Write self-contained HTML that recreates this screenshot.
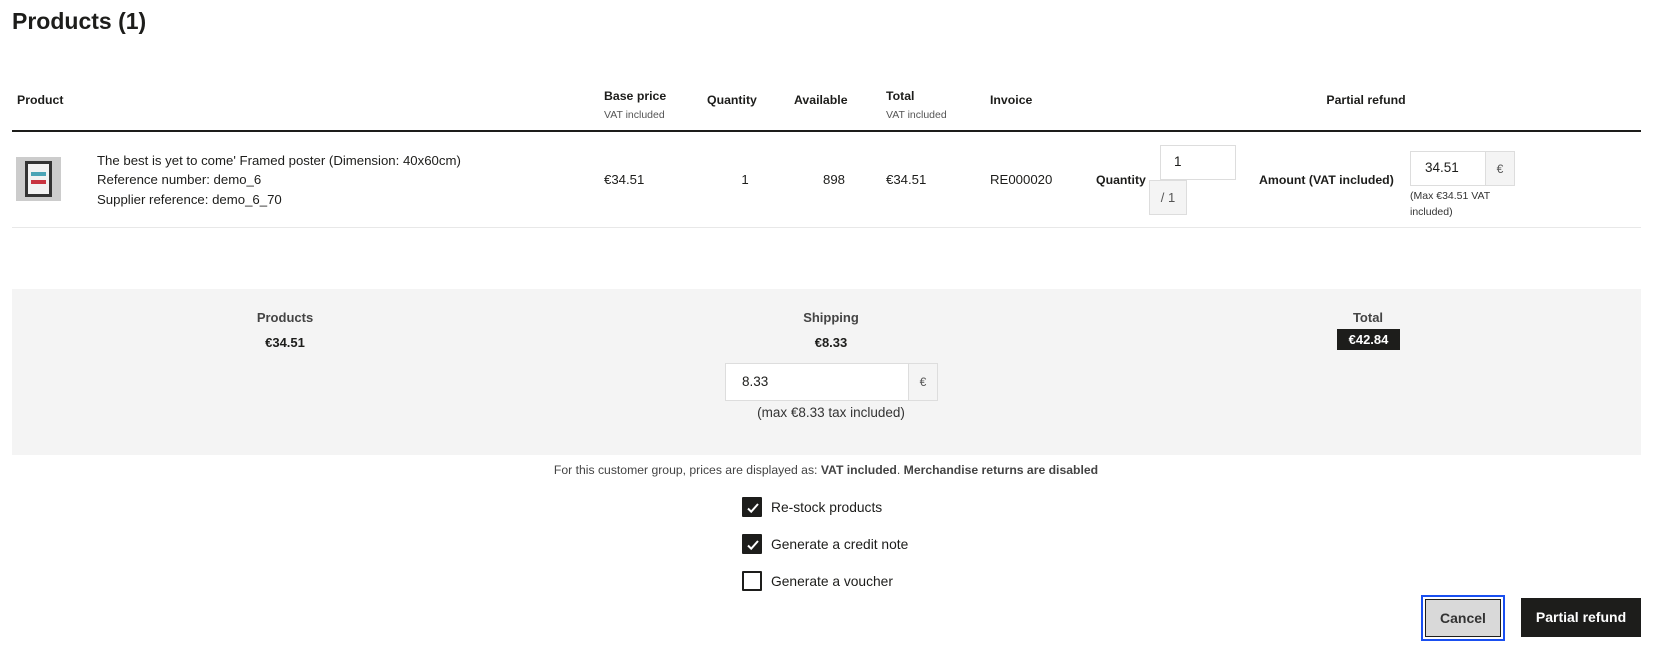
<!DOCTYPE html>
<html><head><meta charset="utf-8"><style>
*{margin:0;padding:0;box-sizing:border-box}
body{width:1659px;height:656px;background:#fff;font-family:"Liberation Sans",sans-serif;color:#1d1d1b;position:relative;overflow:hidden}
.a{position:absolute;white-space:nowrap}
.h{font-weight:bold;font-size:12.3px}
.s{font-size:10.5px;color:#555}
.t{font-size:13.2px}
.c{transform:translateX(-50%)}
.box{position:absolute;border:1px solid #ddd;background:#fff}
.add{position:absolute;border:1px solid #ddd;background:#f4f4f4;color:#555;font-size:12px;display:flex;align-items:center;justify-content:center}
.cb{position:absolute;width:20px;height:20px;border:2px solid #1d1d1b;border-radius:1px;background:#1d1d1b}
.cb svg{position:absolute;left:2px;top:2px}
</style></head><body>
<div class="a" style="left:12px;top:8px;font-size:23px;font-weight:bold">Products (1)</div>

<div class="a h" style="left:17px;top:93px">Product</div>
<div class="a h" style="left:604px;top:89px">Base price</div>
<div class="a s" style="left:604px;top:109px">VAT included</div>
<div class="a h" style="left:707px;top:93px">Quantity</div>
<div class="a h" style="left:794px;top:93px">Available</div>
<div class="a h" style="left:886px;top:89px">Total</div>
<div class="a s" style="left:886px;top:109px">VAT included</div>
<div class="a h" style="left:990px;top:93px">Invoice</div>
<div class="a h c" style="left:1366px;top:93px">Partial refund</div>
<div class="a" style="left:12px;top:130px;width:1629px;height:2px;background:#1d1d1b"></div>

<div class="a" style="left:16px;top:157px;width:45px;height:44px;background:#ccc"></div>
<div class="a" style="left:25px;top:161px;width:27px;height:36px;background:#333"></div>
<div class="a" style="left:28px;top:164px;width:21px;height:30px;background:#f2f2f2"></div>
<div class="a" style="left:31px;top:172px;width:15px;height:4px;background:#4aa3b5"></div>
<div class="a" style="left:31px;top:180px;width:15px;height:4px;background:#c8333f"></div>

<div class="a t" style="left:97px;top:153px">The best is yet to come' Framed poster (Dimension: 40x60cm)</div>
<div class="a t" style="left:97px;top:172px">Reference number: demo_6</div>
<div class="a t" style="left:97px;top:192px">Supplier reference: demo_6_70</div>
<div class="a t" style="left:604px;top:172px">€34.51</div>
<div class="a t c" style="left:745px;top:172px">1</div>
<div class="a t c" style="left:834px;top:172px">898</div>
<div class="a t" style="left:886px;top:172px">€34.51</div>
<div class="a t" style="left:990px;top:172px">RE000020</div>
<div class="a h" style="left:1096px;top:173px">Quantity</div>
<div class="box" style="left:1160px;top:145px;width:76px;height:35px"></div>
<div class="a" style="left:1174px;top:154px;font-size:13.5px">1</div>
<div class="add" style="left:1149px;top:180px;width:38px;height:35px;font-size:13px">/ 1</div>
<div class="a h" style="left:1259px;top:173px">Amount (VAT included)</div>
<div class="box" style="left:1410px;top:151px;width:76px;height:35px"></div>
<div class="a" style="left:1425px;top:160px;font-size:13.5px">34.51</div>
<div class="add" style="left:1485px;top:151px;width:30px;height:35px">€</div>
<div class="a s" style="left:1410px;top:190px;color:#333">(Max €34.51 VAT</div>
<div class="a s" style="left:1410px;top:206px;color:#333">included)</div>
<div class="a" style="left:12px;top:227px;width:1629px;height:1px;background:#e8e8e8"></div>

<div class="a" style="left:12px;top:289px;width:1629px;height:166px;background:#f4f4f4"></div>
<div class="a h c" style="left:285px;top:310px;font-size:13px;color:#444">Products</div>
<div class="a h c" style="left:285px;top:335px;font-size:13px">€34.51</div>
<div class="a h c" style="left:831px;top:310px;font-size:13px;color:#444">Shipping</div>
<div class="a h c" style="left:831px;top:335px;font-size:13px">€8.33</div>
<div class="a h c" style="left:1368px;top:310px;font-size:13px;color:#444">Total</div>
<div class="a" style="left:1337px;top:329px;width:63px;height:21px;background:#1d1d1b;color:#fff;font-weight:bold;font-size:13px;text-align:center;line-height:21px">€42.84</div>
<div class="box" style="left:725px;top:363px;width:184px;height:38px"></div>
<div class="a" style="left:742px;top:374px;font-size:13.5px">8.33</div>
<div class="add" style="left:908px;top:363px;width:30px;height:38px">€</div>
<div class="a c" style="left:831px;top:405px;font-size:13.5px;color:#333">(max €8.33 tax included)</div>

<div class="a c" style="left:826px;top:463px;font-size:12.2px;color:#444">For this customer group, prices are displayed as: <b>VAT included</b>. <b>Merchandise returns are disabled</b></div>

<div class="cb" style="left:742px;top:497px"><svg width="14" height="14" viewBox="0 0 14 14"><path d="M2 7.5l3.2 3.2L12 3" stroke="#fff" stroke-width="2" fill="none"/></svg></div>
<div class="a t" style="left:771px;top:500px;font-size:13.8px">Re-stock products</div>
<div class="cb" style="left:742px;top:534px"><svg width="14" height="14" viewBox="0 0 14 14"><path d="M2 7.5l3.2 3.2L12 3" stroke="#fff" stroke-width="2" fill="none"/></svg></div>
<div class="a t" style="left:771px;top:537px;font-size:13.8px">Generate a credit note</div>
<div class="cb" style="left:742px;top:571px;background:#fff"></div>
<div class="a t" style="left:771px;top:574px;font-size:13.8px">Generate a voucher</div>

<div class="a" style="left:1421px;top:595px;width:84px;height:46px;border:2px solid #1a4ff0;padding:2px"><div style="width:100%;height:100%;border:1px solid #1d1d1b;background:#d9d9d9;font-size:14px;font-weight:bold;color:#333;text-align:center;line-height:36px">Cancel</div></div>
<div class="a" style="left:1521px;top:598px;width:120px;height:39px;background:#1d1d1b;color:#fff;font-size:14px;font-weight:bold;text-align:center;line-height:39px">Partial refund</div>
</body></html>
